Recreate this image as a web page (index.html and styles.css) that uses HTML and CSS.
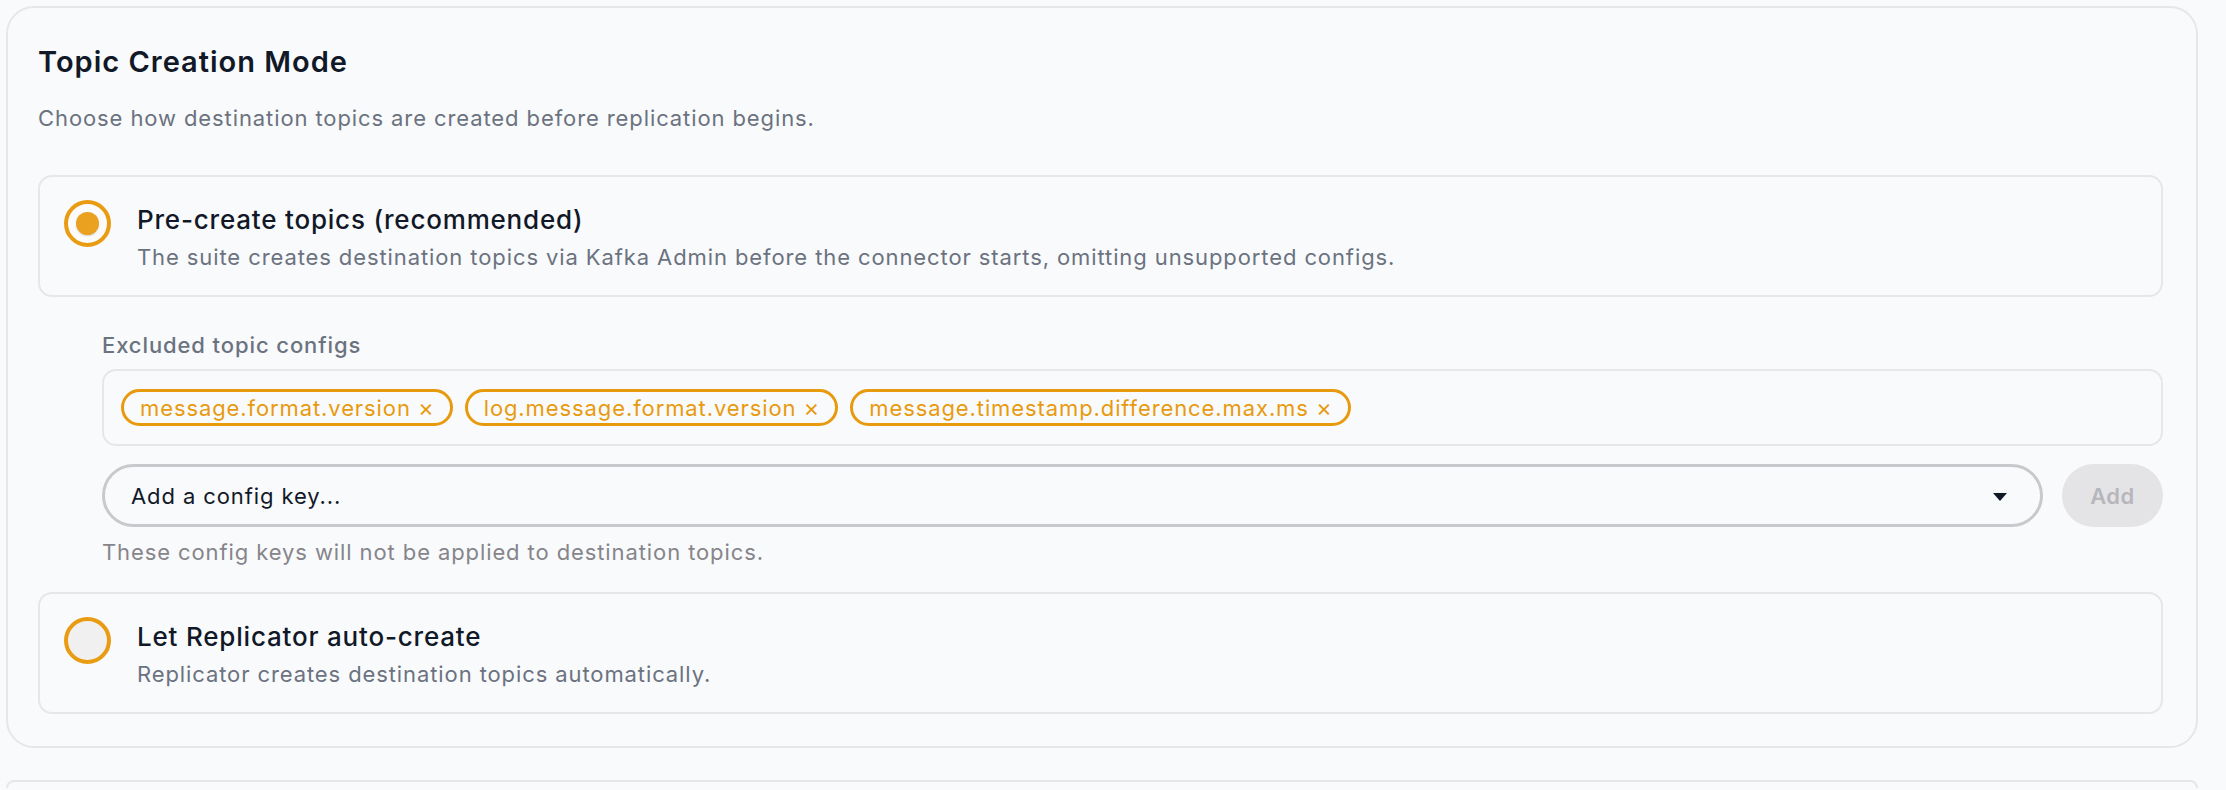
FILE: index.html
```html
<!DOCTYPE html>
<html lang="en">
<head>
    <meta charset="UTF-8">
    <meta name="viewport" content="width=device-width, initial-scale=1.0">
    <title>Topic Creation Mode</title>
    <link rel="stylesheet" href="styles.css">
</head>
<body>
    <section class="panel">
        <h2 class="panel-title">Topic Creation Mode</h2>
        <p class="panel-subtitle">Choose how destination topics are created before replication begins.</p>

        <label class="option">
            <span class="radio checked"></span>
            <span class="option-text">
                <span class="option-title">Pre-create topics (recommended)</span>
                <span class="option-desc">The suite creates destination topics via Kafka Admin before the connector starts, omitting unsupported configs.</span>
            </span>
        </label>

        <div class="excluded">
            <div class="field-label">Excluded topic configs</div>
            <div class="chip-box">
                <span class="chip">message.format.version <span class="chip-x">×</span></span>
                <span class="chip">log.message.format.version <span class="chip-x">×</span></span>
                <span class="chip">message.timestamp.difference.max.ms <span class="chip-x">×</span></span>
            </div>
            <div class="add-row">
                <div class="select">
                    <span>Add a config key...</span>
                    <svg class="caret" width="16" height="10" viewBox="0 0 16 10"><path d="M1 1h14L8 9z" fill="#111827"/></svg>
                </div>
                <button class="add-btn" disabled>Add</button>
            </div>
            <div class="field-hint">These config keys will not be applied to destination topics.</div>
        </div>

        <label class="option">
            <span class="radio"></span>
            <span class="option-text">
                <span class="option-title">Let Replicator auto-create</span>
                <span class="option-desc">Replicator creates destination topics automatically.</span>
            </span>
        </label>
    </section>
    <section class="panel next"></section>
</body>
</html>
```

FILE: styles.css
```css
* {
    box-sizing: border-box;
}
body {
    margin: 0;
    padding: 6px 28px 0 6px;
    background: #f9fafb;
    font-family: Inter, 'Noto Sans', sans-serif;
    color: #111827;
}
.panel {
    border: 2px solid #e5e7eb;
    border-radius: 28px;
    background: #f9fafb;
    padding: 37px 33px 32px 30px;
}
/* only the top edge of the following panel is in view */
.panel.next {
    margin-top: 32px;
    height: 8px;
    padding: 0;
    border-bottom: none;
    border-radius: 28px 28px 0 0;
}
.panel-title {
    margin: 0;
    font-size: 29px;
    line-height: 34px;
    font-weight: 600;
    letter-spacing: 1px;
    color: #111827;
}
.panel-subtitle {
    margin: 23px 0 0;
    font-size: 22px;
    line-height: 32px;
    letter-spacing: 0.9px;
    color: #6b7280;
}
.option {
    display: flex;
    align-items: flex-start;
    gap: 26px;
    margin-top: 41px;
    padding: 26px 24px 22px 24px;
    border: 2px solid #e5e7eb;
    border-radius: 14px;
    background: #f9fafb;
}
.radio {
    flex: none;
    width: 47px;
    height: 47px;
    margin-top: -3px;
    border: 4px solid #e99b12;
    border-radius: 50%;
    background: #f0f0f1;
    display: flex;
    align-items: center;
    justify-content: center;
}
.radio.checked {
    background: #fbfbfb;
}
.radio.checked::after {
    content: "";
    width: 23px;
    height: 23px;
    border-radius: 50%;
    background: #e9a11f;
    box-shadow: 0 1px 2px rgba(0, 0, 0, 0.15);
}
.option-text {
    display: flex;
    flex-direction: column;
    gap: 4px;
}
.option-title {
    font-size: 26px;
    line-height: 34px;
    font-weight: 500;
    letter-spacing: 0.8px;
    color: #111827;
}
.option-desc {
    font-size: 22px;
    line-height: 32px;
    letter-spacing: 0.9px;
    color: #6b7280;
}
.excluded {
    margin-left: 64px;
}
.field-label {
    margin-top: 33px;
    font-size: 22px;
    line-height: 30px;
    font-weight: 500;
    letter-spacing: 0.9px;
    color: #6b7280;
}
.chip-box {
    display: flex;
    align-items: center;
    gap: 12px;
    height: 77px;
    margin-top: 9px;
    padding: 0 17px;
    border: 2px solid #e5e7eb;
    border-radius: 14px;
    background: #f9fafb;
}
.chip {
    display: inline-flex;
    align-items: center;
    height: 37px;
    padding: 0 15px 0 16px;
    border: 3.5px solid #e89a0e;
    border-radius: 19px;
    font-size: 22px;
    letter-spacing: 0.9px;
    color: #e89a0e;
    white-space: pre;
}
.chip-x {
    font-size: 24px;
}
.add-row {
    display: flex;
    gap: 19px;
    margin-top: 18px;
}
.select {
    flex: 1;
    display: flex;
    align-items: center;
    justify-content: space-between;
    height: 63px;
    padding: 0 32px 0 26px;
    border: 3px solid #c9c9cd;
    border-radius: 32px;
    font-size: 22px;
    letter-spacing: 0.9px;
    color: #111827;
}
.caret {
    margin-top: 3px;
}
.add-btn {
    width: 101px;
    height: 63px;
    border: none;
    border-radius: 32px;
    background: #e4e4e7;
    color: #b6b6bc;
    font-family: inherit;
    font-size: 22px;
    font-weight: 600;
    letter-spacing: 0.5px;
}
.field-hint {
    margin-top: 10px;
    font-size: 22px;
    line-height: 30px;
    letter-spacing: 0.9px;
    color: #85858b;
}
.excluded + .option {
    margin-top: 25px;
}
```
